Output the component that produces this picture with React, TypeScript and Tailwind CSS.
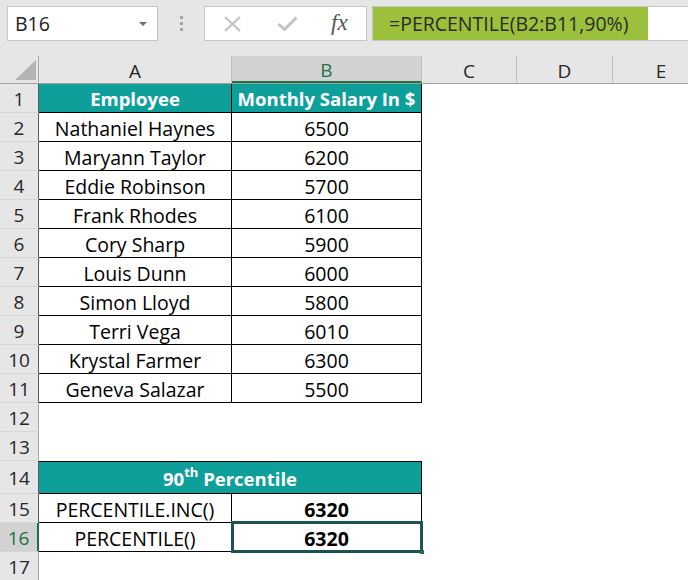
import React from "react";

const TEAL = "bg-[#0f9f9b]";

const employees: [string, number][] = [
  ["Nathaniel Haynes", 6500],
  ["Maryann Taylor", 6200],
  ["Eddie Robinson", 5700],
  ["Frank Rhodes", 6100],
  ["Cory Sharp", 5900],
  ["Louis Dunn", 6000],
  ["Simon Lloyd", 5800],
  ["Terri Vega", 6010],
  ["Krystal Farmer", 6300],
  ["Geneva Salazar", 5500],
];

const RowHeader = ({
  n,
  tone = "plain",
  h = "h-[29px]",
}: {
  n: number;
  tone?: "plain" | "table" | "active";
  h?: string;
}) => {
  const cls =
    tone === "active"
      ? "bg-[#d2d2d2] text-[#217346] border-r-2 border-r-[#217346]"
      : tone === "table"
      ? "bg-[#e6e6e6] text-[#262626] border-r border-r-[#5a5a5a]"
      : "bg-[#e6e6e6] text-[#262626] border-r border-r-[#a8a8a8]";
  return (
    <div
      className={`${h} w-[39px] shrink-0 flex items-center justify-center pt-[3px] border-b border-b-[#d6d6d6] text-[19px] ${cls}`}
    >
      {n}
    </div>
  );
};

const Toolbar = () => (
  <div className="h-[56px] bg-[#e6e6e6] flex items-start pt-[6px]">
    <div className="ml-[7px] w-[151px] h-[35px] bg-white border border-[#c6c6c6] flex items-center justify-between pl-[7px] pr-[10px]">
      <span className="text-[19.5px] text-[#222]">B16</span>
      <span className="w-0 h-0 border-l-[4px] border-r-[4px] border-t-[4px] border-l-transparent border-r-transparent border-t-[#6d6d6d]" />
    </div>
    <div className="w-[46px] h-[35px] flex flex-col items-center justify-center gap-[3px]">
      <span className="w-[3px] h-[3px] bg-[#a6a6a6]" />
      <span className="w-[3px] h-[3px] bg-[#a6a6a6]" />
      <span className="w-[3px] h-[3px] bg-[#a6a6a6]" />
    </div>
    <div className="w-[163px] h-[35px] bg-white border border-[#c6c6c6] flex items-center pl-[18px]">
      <svg width="19" height="16" viewBox="0 0 19 16" className="shrink-0">
        <path d="M2 1 L17 15 M17 1 L2 15" stroke="#c3c3c3" strokeWidth="2.2" fill="none" />
      </svg>
      <svg width="21" height="15" viewBox="0 0 21 15" className="ml-[35px] shrink-0">
        <path d="M1.5 8 L7.5 13.5 L19.5 1.5" stroke="#c3c3c3" strokeWidth="3" fill="none" />
      </svg>
      <span className="ml-[33px] font-['Liberation_Serif',serif] italic text-[23px] text-[#555] leading-none -mt-[2px]">
        fx
      </span>
    </div>
    <div className="ml-[5px] flex-1 h-[35px] bg-white border border-[#c6c6c6] border-r-0 flex">
      <div className="w-[275px] h-full bg-[#9bc13c] flex items-center pl-[16px] pt-[1px] text-[19.5px] text-[#2b2b2b]">
        =PERCENTILE(B2:B11,90%)
      </div>
    </div>
  </div>
);

const ColumnHeaders = () => (
  <div className="h-[28px] flex overflow-hidden bg-[#e6e6e6] border-b border-b-[#9f9f9f] text-[19px] text-[#262626]">
    <div className="w-[39px] shrink-0 border-r border-r-[#a8a8a8] relative">
      <svg width="39" height="27" viewBox="0 0 39 27" className="absolute left-0 top-0">
        <polygon points="15,24 36,24 36,4" fill="#b4b4b4" />
      </svg>
    </div>
    <div className="w-[193px] shrink-0 flex items-center justify-center pt-[3px] border-r border-r-[#c0c0c0]">
      A
    </div>
    <div className="w-[190px] shrink-0 flex items-center justify-center pt-[3px] bg-[#d2d2d2] text-[#217346] border-r border-r-[#c0c0c0] border-b-2 border-b-[#217346]">
      B
    </div>
    <div className="w-[95px] shrink-0 flex items-center justify-center pt-[3px] border-r border-r-[#c0c0c0]">
      C
    </div>
    <div className="w-[96px] shrink-0 flex items-center justify-center pt-[3px] border-r border-r-[#c0c0c0]">
      D
    </div>
    <div className="w-[96px] shrink-0 flex items-center justify-center pt-[3px]">E</div>
  </div>
);

const EmptyRow = ({ n }: { n: number }) => (
  <div className="flex">
    <RowHeader n={n} />
    <div className="flex-1 h-[29px] bg-white" />
  </div>
);

const cell = "w-[193px] h-[29px] flex items-center justify-center pt-[3px] border-r border-b border-black text-[19.5px]";
const cellB = "w-[190px] h-[29px] flex items-center justify-center pt-[3px] border-r border-b border-black text-[19.5px]";

export default function App() {
  return (
    <div className="w-[688px] h-[580px] overflow-hidden bg-white font-['Open_Sans',sans-serif] text-black">
      <Toolbar />
      <ColumnHeaders />

      <div className="flex">
        <RowHeader n={1} tone="table" />
        <div className={`w-[193px] h-[29px] ${TEAL} text-white font-bold text-[18.5px] flex items-center justify-center pt-[2px] border-r border-b border-black`}>
          Employee
        </div>
        <div className={`w-[190px] h-[29px] ${TEAL} text-white font-bold text-[18.5px] flex items-center justify-center pt-[2px] border-r border-b border-black`}>
          Monthly Salary In $
        </div>
      </div>

      {employees.map(([name, pay], i) => (
        <div key={name} className="flex">
          <RowHeader n={i + 2} tone="table" />
          <div className={cell}>{name}</div>
          <div className={cellB}>{pay}</div>
        </div>
      ))}

      <EmptyRow n={12} />
      <EmptyRow n={13} />

      <div className="flex">
        <RowHeader n={14} tone="table" h="h-[33px]" />
        <div className={`w-[383px] h-[33px] ${TEAL} text-white font-bold text-[18.5px] flex items-end justify-center pb-[0px] border-t border-r border-b border-black`}>
          <span className="leading-[28px]">
            90<sup className="text-[13px] relative -top-[9px]">th</sup> Percentile
          </span>
        </div>
      </div>

      <div className="flex">
        <RowHeader n={15} tone="table" />
        <div className={cell}>PERCENTILE.INC()</div>
        <div className={`${cellB} font-bold`}>6320</div>
      </div>

      <div className="flex">
        <RowHeader n={16} tone="active" />
        <div className={cell}>PERCENTILE()</div>
        <div className={`${cellB} font-bold relative`}>
          6320
          <div className="absolute -left-[1px] -top-[2px] -right-[2px] -bottom-[2px] border-[3px] border-[#1b5451]" />
          <div className="absolute -right-[3px] -bottom-[3px] w-[4px] h-[4px] bg-[#217346]" />
        </div>
      </div>

      <EmptyRow n={17} />
    </div>
  );
}
